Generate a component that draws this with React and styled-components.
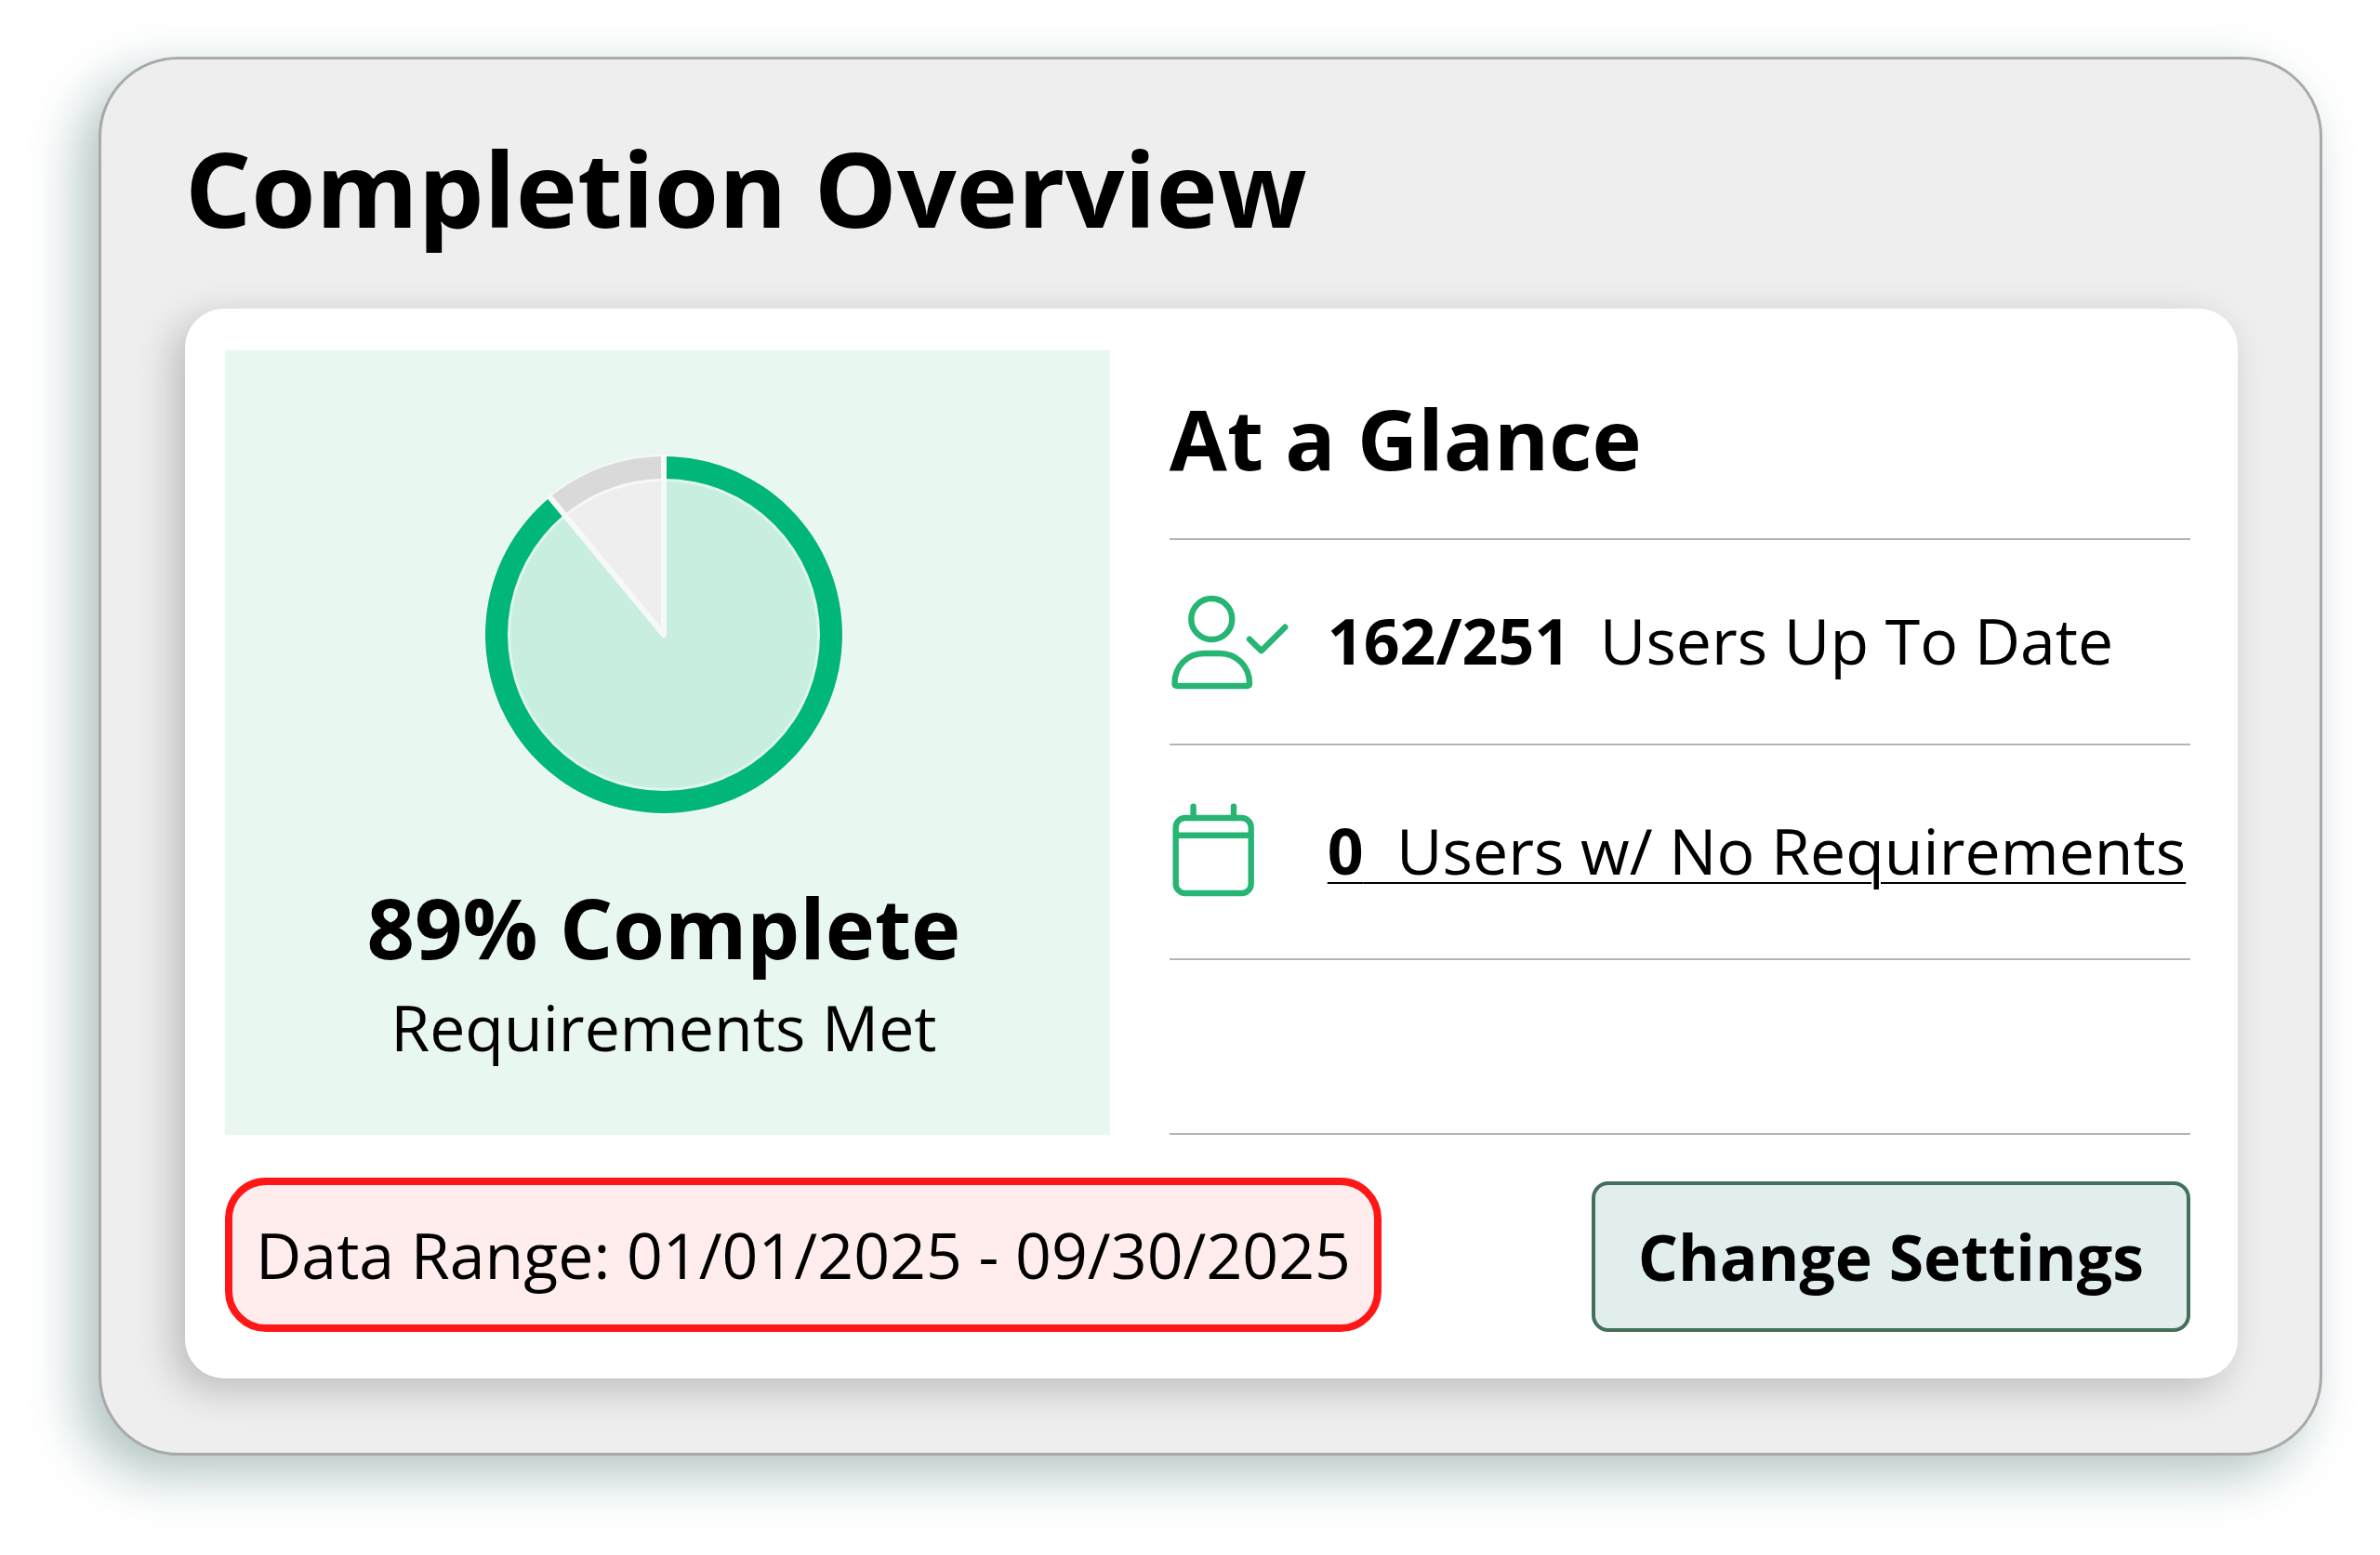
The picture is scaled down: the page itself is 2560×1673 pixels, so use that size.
import React from 'react'
import styled, { createGlobalStyle } from 'styled-components'

const overview = {
    percent: 89,
    from: '01/01/2025',
    to: '09/30/2025',
}

const GlobalStyle = createGlobalStyle`
    * {
        box-sizing: border-box;
    }
    body {
        margin: 0;
        background: #fff;
        color: #000;
        font-family: "Open Sans", "Noto Sans", sans-serif;
        font-size: 68px;
        line-height: 92px;
    }
`

const UserCheckIcon = () => (
    <Icon viewBox="1 -2 130 106" aria-hidden="true">
        <circle cx="46.3" cy="28" r="22" />
        <path d="M6.5 97C6.5 79 20 65 38 65H55C73 65 87 79 87 97Q87 100 84 100H9.5Q6.5 100 6.5 97Z" />
        <path d="M87 49.7L99.7 62.2L125.3 36.7" />
    </Icon>
)

const CalendarIcon = () => (
    <Icon viewBox="1 -1 130 106" aria-hidden="true">
        <rect x="7.7" y="17" width="81" height="81" rx="10" />
        <path d="M8 35.7H88M26.6 4.8V17M70 4.8V17" />
    </Icon>
)

// point on a circle round (200, 200), angle in turns clockwise from the top
const point = (turn, r) => {
    const a = turn * 2 * Math.PI
    return `${(200 + r * Math.sin(a)).toFixed(2)} ${(200 - r * Math.cos(a)).toFixed(2)}`
}

function PieChart({ percent }) {
    const end = percent / 100

    return (
        <Pie viewBox="0 0 400 400" role="img" aria-label={`${percent}% complete`}>
            <circle cx="200" cy="200" r="194" fill="#f1faf6" />
            <circle cx="200" cy="200" r="192" fill="#00b779" />
            <circle cx="200" cy="200" r="168" fill="#e0f5ec" />
            <circle cx="200" cy="200" r="165" fill="#c8eedf" />
            <path d={`M200 200L${point(end, 194)}A194 194 0 0 1 200 6Z`} fill="#f6f7f7" />
            <path d={`M${point(end, 192)}A192 192 0 0 1 200 8V32A168 168 0 0 0 ${point(end, 168)}Z`} fill="#d9d9d9" />
            <path d={`M200 200L${point(end, 165)}A165 165 0 0 1 200 35Z`} fill="#eee" />
            <path d={`M${point(end, 194)}L200 200V6`} fill="none" stroke="#f7f9f8" strokeWidth="6" strokeLinejoin="round" />
        </Pie>
    )
}

function App() {
    return (
        <>
            <GlobalStyle />
            <Widget>
                <Title>Completion Overview</Title>
                <Card>
                    <Columns>
                        <Progress>
                            <PieChart percent={overview.percent} />
                            <Heading>{overview.percent}% Complete</Heading>
                            <Caption>Requirements Met</Caption>
                        </Progress>
                        <Glance>
                            <GlanceHeading>At a Glance</GlanceHeading>
                            <Row>
                                <UserCheckIcon />
                                <span><Count>162/251</Count> Users Up To Date</span>
                            </Row>
                            <Row>
                                <CalendarIcon />
                                <UsersLink href="#no-requirements"><b>0</b>&nbsp; Users w/ No Requirements</UsersLink>
                            </Row>
                            <Row />
                        </Glance>
                    </Columns>
                    <Footer>
                        <DataRange>Data Range: {overview.from} - {overview.to}</DataRange>
                        <SettingsButton type="button">Change Settings</SettingsButton>
                    </Footer>
                </Card>
            </Widget>
        </>
    )
}

const Widget = styled.main`
    margin: 61px 62px 106px 106px;
    padding: 62px 88px 80px 90px;
    background: #eee;
    border: 3px solid #a8a9a9;
    border-radius: 86px;
    box-shadow: -20px 20px 56px rgba(19, 73, 73, 0.33);
`

const Title = styled.h1`
    margin: 0 0 54px;
    font-size: 112px;
    line-height: 152px;
    font-weight: 700;
`

const Card = styled.section`
    padding: 45px 51px 50px 43px;
    background: #fff;
    border-radius: 42px;
    box-shadow: -12px 12px 42px rgba(0, 0, 0, 0.21);
`

const Columns = styled.div`
    display: grid;
    grid-template-columns: 13fr 15fr;
    column-gap: 64px;
`

const Progress = styled.div`
    display: flex;
    flex-direction: column;
    align-items: center;
    padding: 106px 8px 70px 0;
    background: #e8f7f0;
`

const Pie = styled.svg`
    width: 400px;
    height: 400px;
    margin-bottom: 52px;
`

const Heading = styled.h2`
    margin: 0;
    font-size: 90px;
    line-height: 124px;
    font-weight: 700;
`

const GlanceHeading = styled(Heading)`
    padding: 32px 0 46px;
    border-bottom: 2px solid #b4b4b4;
`

const Caption = styled.p`
    margin: 0;
`

const Glance = styled.div`
    display: grid;
    grid-template-rows: auto 221px 231px 1fr;
`

const Row = styled.div`
    display: flex;
    align-items: center;
    gap: 40px;
    padding-bottom: 4px;
    border-bottom: 2px solid #b4b4b4;
    white-space: nowrap;
`

const Count = styled.b`
    margin-right: 14px;
`

const Icon = styled.svg`
    flex: none;
    width: 130px;
    height: 106px;
    fill: none;
    stroke: #26b573;
    stroke-width: 6.4;
    stroke-linecap: round;
    stroke-linejoin: round;
`

const UsersLink = styled.a`
    color: inherit;
    text-decoration: underline;
    text-decoration-thickness: 2px;
    text-underline-offset: 8px;
`

const Footer = styled.div`
    display: flex;
    align-items: flex-end;
    justify-content: space-between;
    margin-top: 46px;
`

const DataRange = styled.p`
    margin: 0;
    padding: 29px 25px;
    background: #ffeded;
    border: 8px solid #ff1717;
    border-radius: 44px;
`

const SettingsButton = styled.button`
    padding: 31px 46px;
    background: #e2eeed;
    border: 4px solid #42705a;
    border-radius: 18px;
    color: inherit;
    font: inherit;
    font-weight: 700;
    cursor: pointer;
`

export default App
